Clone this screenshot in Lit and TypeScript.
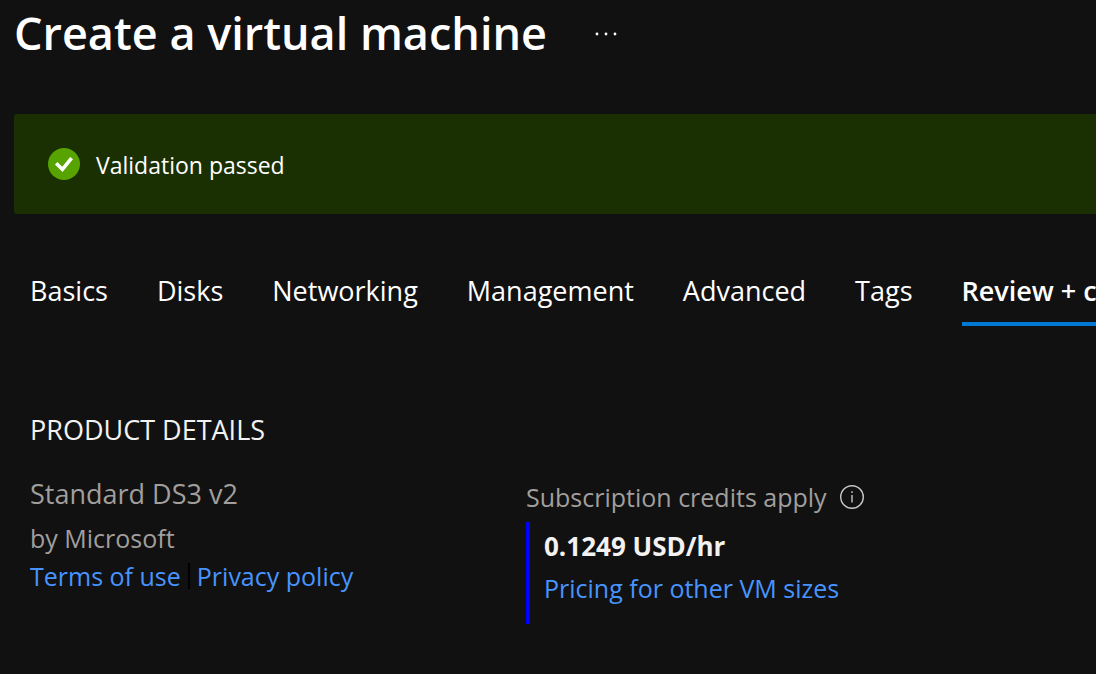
import { LitElement, html, css } from "lit";
import { customElement, state } from "lit/decorators.js";

@customElement("app-root")
export class AppRoot extends LitElement {
  static styles = css`
    :host { display: block; min-height: 100vh; box-sizing: border-box; overflow: hidden; background: #111111; color: #ffffff; font-family: "Open Sans", "Noto Sans", sans-serif; font-size: 25px; line-height: 38px; }
    * { box-sizing: border-box; }
    header { display: flex; align-items: center; gap: 43px; height: 66px; padding-left: 14px; }
    h1 { margin: 0; font-size: 45px; line-height: 66px; font-weight: 600; white-space: nowrap; }
    button { border: 0; padding: 0; margin: 0; background: none; color: inherit; font: inherit; cursor: pointer; }
    .more { display: flex; padding: 6px 4px 4px; }
    svg { display: block; flex: none; }
    .banner { display: flex; align-items: center; gap: 16px; height: 100px; margin: 48px 0 0 14px; padding-left: 34px; background: #1b3002; border-radius: 3px 0 0 3px; font-size: 23px; }
    .banner span { padding-top: 2px; }
    nav { display: flex; gap: 49px; margin-top: 56px; padding-left: 30px; }
    .tab { flex: none; height: 56px; padding-bottom: 10px; border-bottom: 4px solid transparent; font-size: 27px; white-space: nowrap; }
    .tab.active { border-color: #0078d4; font-weight: 600; }
    .content { padding: 84px 30px 0; }
    h2 { margin: 0; font-size: 27px; line-height: 40px; font-weight: 400; color: #f3f2f1; }
    .details { display: grid; grid-template-columns: minmax(0, 496px) minmax(0, 1fr); margin-top: 24px; color: #a19f9d; white-space: nowrap; }
    p { margin: 0; }
    a { color: #4894fe; text-decoration: none; }
    .name { margin-bottom: 5px; font-size: 27px; line-height: 40px; }
    .links { display: flex; align-items: center; gap: 7px; }
    .divider { width: 2px; height: 26px; background: #000000; }
    .cost { padding-top: 3px; }
    .credits { display: flex; align-items: center; gap: 13px; margin-bottom: 5px; line-height: 40px; }
    .price { border-left: 4px solid #0000ff; padding: 3px 0 15px 14px; line-height: 42px; }
    .amount { color: #f3f2f1; font-size: 26px; font-weight: 700; }
  `;
  @state() private current = "Review + create";
  private tabs = ["Basics", "Disks", "Networking", "Management", "Advanced", "Tags", "Review + create"];
  render() {
    return html`
      <header><h1>Create a virtual machine</h1>
        <button class="more" aria-label="More actions"><svg width="24" height="6" viewBox="0 0 24 6" fill="#fff"><circle cx="3" cy="3" r="1.4"/><circle cx="12" cy="3" r="1.4"/><circle cx="21" cy="3" r="1.4"/></svg></button>
      </header>
      <div class="banner" role="status"><svg width="32" height="32" viewBox="0 0 32 32"><circle cx="16" cy="16" r="16" fill="#57a300"/><path d="M8.2 15.2l6.2 6.2L23.6 10.2" fill="none" stroke="#fff" stroke-width="3.6"/></svg><span>Validation passed</span></div>
      <nav role="tablist">${this.tabs.map(t => html`<button role="tab" class="tab ${t === this.current ? "active" : ""}" aria-selected=${t === this.current} @click=${() => (this.current = t)}>${t}</button>`)}</nav>
      <section class="content"><h2>PRODUCT DETAILS</h2>
        <div class="details">
          <div><p class="name">Standard DS3 v2</p><p>by Microsoft</p><div class="links"><a href="#terms">Terms of use</a><span class="divider"></span><a href="#privacy">Privacy policy</a></div></div>
          <div class="cost"><div class="credits"><span>Subscription credits apply</span><svg width="24" height="24" viewBox="0 0 24 24"><circle cx="12" cy="12" r="11.3" fill="none" stroke="#c8c6c4" stroke-width="1.4"/><path d="M12 10v7.5M12 6.2v1.8" stroke="#c8c6c4" stroke-width="1.4"/></svg></div>
            <div class="price"><p class="amount">0.1249 USD/hr</p><a href="#pricing">Pricing for other VM sizes</a></div></div>
        </div></section>`;
  }
}
